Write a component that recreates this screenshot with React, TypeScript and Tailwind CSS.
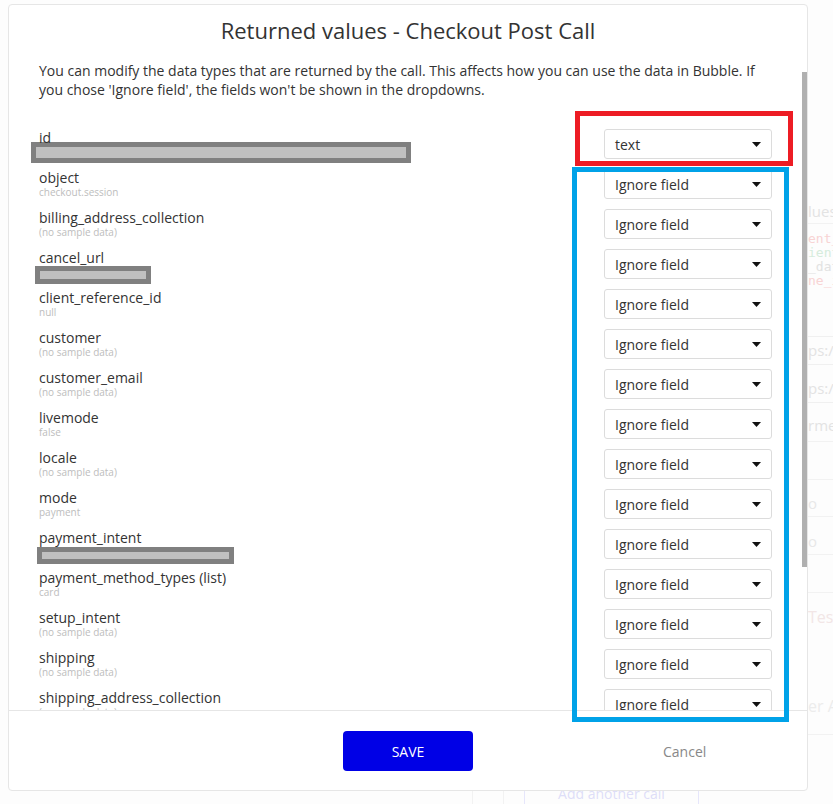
import React from 'react';

type Row = {
  label: string;
  sub?: string;
  redact?: { w: number; h: number; ml: string; mt: string };
};

const rows: Row[] = [
  { label: 'id', redact: { w: 380, h: 21, ml: '-ml-[8px]', mt: '-mt-[5px]' } },
  { label: 'object', sub: 'checkout.session' },
  { label: 'billing_address_collection', sub: '(no sample data)' },
  { label: 'cancel_url', redact: { w: 116, h: 18, ml: '-ml-[4px]', mt: '-mt-[1px]' } },
  { label: 'client_reference_id', sub: 'null' },
  { label: 'customer', sub: '(no sample data)' },
  { label: 'customer_email', sub: '(no sample data)' },
  { label: 'livemode', sub: 'false' },
  { label: 'locale', sub: '(no sample data)' },
  { label: 'mode', sub: 'payment' },
  { label: 'payment_intent', redact: { w: 197, h: 17, ml: '-ml-[2px]', mt: 'mt-0' } },
  { label: 'payment_method_types (list)', sub: 'card' },
  { label: 'setup_intent', sub: '(no sample data)' },
  { label: 'shipping', sub: '(no sample data)' },
  { label: 'shipping_address_collection', sub: '(no sample data)' },
];

function Caret() {
  return (
    <svg width="9" height="5" viewBox="0 0 9 5" className="block">
      <path d="M0 0 L9 0 L4.5 5 Z" fill="#111" />
    </svg>
  );
}

function Dropdown({ value }: { value: string }) {
  return (
    <div className="mt-[2px] w-[168px] h-[30px] shrink-0 border border-[#dcdcdc] rounded-[3px] bg-white flex items-center justify-between pl-[10px] pr-[10px]">
      <span className="text-[14px] leading-[19px] text-[#333]">{value}</span>
      <Caret />
    </div>
  );
}

export default function App() {
  return (
    <div
      className="relative w-[833px] h-[804px] overflow-hidden bg-[#fdfdfd]"
      style={{ fontFamily: '"Open Sans", "Noto Sans", sans-serif' }}
    >
      {/* faint page behind the modal: right strip */}
      <div className="absolute left-[808px] top-[202px] w-[40px] flex flex-col text-[15px] leading-[18px] text-[#e3e3e3] whitespace-nowrap">
        <div>lues</div>
        <div className="mt-[3px] h-px bg-[#f2f2f2]" />
        <div
          className="mt-[8px] text-[13px] leading-[14px]"
          style={{ fontFamily: '"DejaVu Sans Mono", monospace' }}
        >
          <div className="text-[#f8d4d4]">ent_</div>
          <div className="text-[#d6ecdc]">ient</div>
          <div className="text-[#e2e2e2]">_dat</div>
          <div className="text-[#f8d4d4]">ne_i</div>
        </div>
        <div className="mt-[48px] h-px bg-[#f0f0f0]" />
        <div className="mt-[4px]">ps://</div>
        <div className="mt-[5px] h-px bg-[#f0f0f0]" />
        <div className="mt-[14px]">ps://</div>
        <div className="mt-[5px] h-px bg-[#f0f0f0]" />
        <div className="mt-[13px]">rmen</div>
        <div className="mt-[7px] h-px bg-[#f2f2f2]" />
        <div className="mt-[37px] h-px bg-[#f2f2f2]" />
        <div className="mt-[14px] text-[#e8e8e8]">o</div>
        <div className="mt-[4px] h-px bg-[#f2f2f2]" />
        <div className="mt-[15px] text-[#e8e8e8]">o</div>
        <div className="mt-[4px] h-px bg-[#f2f2f2]" />
        <div className="mt-[37px] h-px bg-[#f2f2f2]" />
        <div className="mt-[14px] text-[16px] leading-[20px] text-[#f2e6e6]">Test</div>
        <div className="mt-[69px] text-[16px] leading-[20px] text-[#ececec]">er AP</div>
        <div className="mt-[18px] h-px bg-[#f2f2f2]" />
      </div>

      {/* faint page behind the modal: bottom strip */}
      <div className="absolute left-[472px] top-[790px] h-[14px] flex items-stretch">
        <div className="w-px bg-[#f2f2f2]" />
        <div className="ml-[30px] w-px bg-[#f2f2f2]" />
        <div className="ml-[20px] w-[175px] border-x border-[#e6e6fb] flex justify-center">
          <span className="-mt-[6px] text-[14px] leading-[19px] text-[#dedef8] whitespace-nowrap">Add another call</span>
        </div>
      </div>

      {/* modal */}
      <div className="absolute left-[8px] top-[4px] w-[800px] h-[787px] bg-white border border-[#e6e6e6] rounded-[4px] flex flex-col overflow-hidden">
        <div className="pt-[10px] text-center text-[22px] leading-[30px] text-[#333]">
          Returned values - Checkout Post Call
        </div>
        <p className="mt-[16px] pl-[30px] pr-[50px] text-[14px] leading-[19px] text-[#333]">
          You can modify the data types that are returned by the call. This affects how you can use the data in Bubble. If you chose 'Ignore field', the fields won't be shown in the dropdowns.
        </p>
        <div className="mt-[28px] flex-1 min-h-0 overflow-hidden">
          {rows.map((r, i) => (
            <div key={r.label} className="h-[40px] flex justify-between pl-[30px] pr-[35px]">
              <div className="pt-[1px]">
                <div className="text-[14px] leading-[19px] text-[#333] whitespace-nowrap">{r.label}</div>
                {r.sub && (
                  <div className="text-[10px] leading-[11px] text-[#bdbdbd] whitespace-nowrap">{r.sub}</div>
                )}
                {r.redact && (
                  <div
                    className={`${r.redact.ml} ${r.redact.mt} border-[5px] border-[#808080] bg-[#c0c0c0]`}
                    style={{ width: r.redact.w, height: r.redact.h }}
                  />
                )}
              </div>
              <Dropdown value={i === 0 ? 'text' : 'Ignore field'} />
            </div>
          ))}
        </div>
        <div className="h-[80px] shrink-0 border-t border-[#e6e6e6] pt-[20px] pl-[334px] flex items-start">
          <button className="w-[130px] h-[40px] rounded-[4px] bg-[#0000e6] text-white text-[14px] leading-[19px]">
            SAVE
          </button>
          <span className="ml-[190px] mt-[11px] text-[14px] leading-[19px] text-[#888]">Cancel</span>
        </div>
        {/* scrollbar thumb */}
        <div className="absolute left-[793px] top-[67px] w-[5px] h-[495px] bg-[#b0b0b0]" />
      </div>

      {/* annotation boxes drawn over the screenshot */}
      <div className="absolute left-[575px] top-[111px] w-[218px] h-[55px] border-[5px] border-[#ed1c24]" />
      <div className="absolute left-[572px] top-[167px] w-[217px] h-[555px] border-[5px] border-[#00a2e8]" />
    </div>
  );
}
